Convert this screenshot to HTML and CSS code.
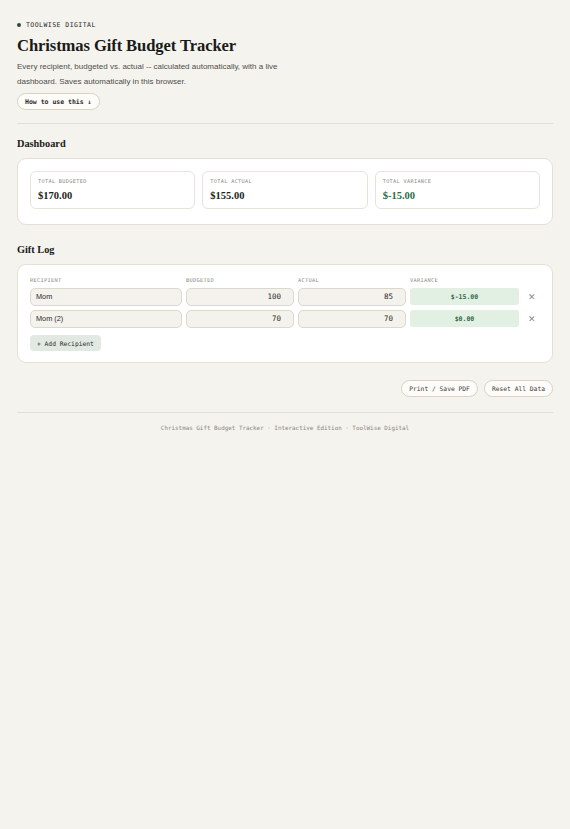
FILE: index.html
```html
<!DOCTYPE html>
<html lang="en">
<head>
<meta charset="utf-8">
<title>Christmas Gift Budget Tracker</title>
<link rel="stylesheet" href="styles.css">
</head>
<body>
<main class="page">
  <header class="hero">
    <div class="brand"><span class="brand-dot"></span>TOOLWISE DIGITAL</div>
    <h1 class="title">Christmas Gift Budget Tracker</h1>
    <p class="lede">Every recipient, budgeted vs. actual -- calculated automatically, with a live dashboard. Saves automatically in this browser.</p>
    <button class="pill-btn how">How to use this ↓</button>
  </header>

  <hr class="rule">

  <section class="section">
    <h2 class="section-title">Dashboard</h2>
    <div class="card dash">
      <div class="stats">
        <div class="stat">
          <div class="stat-label">TOTAL BUDGETED</div>
          <div class="stat-value">$170.00</div>
        </div>
        <div class="stat">
          <div class="stat-label">TOTAL ACTUAL</div>
          <div class="stat-value">$155.00</div>
        </div>
        <div class="stat">
          <div class="stat-label">TOTAL VARIANCE</div>
          <div class="stat-value green">$-15.00</div>
        </div>
      </div>
    </div>
  </section>

  <section class="section">
    <h2 class="section-title">Gift Log</h2>
    <div class="card log">
      <div class="grid head">
        <div>RECIPIENT</div>
        <div>BUDGETED</div>
        <div>ACTUAL</div>
        <div>VARIANCE</div>
        <div></div>
      </div>
      <div class="grid row">
        <input class="field text" value="Mom">
        <input class="field num" value="100">
        <input class="field num" value="85">
        <div class="var">$-15.00</div>
        <button class="remove">✕</button>
      </div>
      <div class="grid row">
        <input class="field text" value="Mom (2)">
        <input class="field num" value="70">
        <input class="field num" value="70">
        <div class="var">$0.00</div>
        <button class="remove">✕</button>
      </div>
      <button class="add">+ Add Recipient</button>
    </div>
  </section>

  <div class="actions">
    <button class="pill-btn act">Print / Save PDF</button>
    <button class="pill-btn act">Reset All Data</button>
  </div>

  <footer class="footer">Christmas Gift Budget Tracker · Interactive Edition · ToolWise Digital</footer>
</main>
</body>
</html>
```

FILE: styles.css
```css
* { box-sizing: border-box; }
html, body { margin: 0; padding: 0; background: #f4f3ee; }
body { font-family: "Liberation Sans", Arial, sans-serif; color: #1c1c1a; }

.page { padding: 20px 17px 20px 17px; }

.hero { display: flex; flex-direction: column; align-items: flex-start; }
.brand {
  display: flex; align-items: center; gap: 5px;
  font-family: "DejaVu Sans Mono", monospace; font-size: 6.5px; letter-spacing: 0.45px;
  color: #2a2a28; line-height: 10px;
}
.brand-dot { width: 4px; height: 4px; border-radius: 50%; background: #2e4a3a; }
.title {
  font-family: "Liberation Serif", "Times New Roman", serif; font-weight: 700;
  font-size: 16.6px; line-height: 20px; margin: 6px 0 0; letter-spacing: -0.1px; color: #1a1a18;
}
.lede {
  font-size: 8px; line-height: 15px; color: #4e4e4a; margin: 2.5px 0 0; max-width: 285px;
}
.pill-btn {
  font-family: "DejaVu Sans Mono", monospace; border: 1px solid #d6d2c6; background: #fdfcf9;
  border-radius: 10px; color: #2a2a28; cursor: pointer;
}
.how { margin-top: 4.5px; height: 17px; padding: 0 7px; font-size: 6.5px; font-weight: 700; }

.rule { border: 0; border-top: 1px solid #e2dfd6; margin: 12.5px 0 0; }

.section { margin-top: 13px; }
.section-title {
  font-family: "Liberation Serif", "Times New Roman", serif; font-weight: 700;
  font-size: 10.3px; line-height: 13px; margin: 0 0 8.5px; color: #1a1a18;
}
.card {
  background: #fff; border: 1.5px solid #e4e0d5; border-radius: 9px;
}
.dash { padding: 11.5px 12px 15.5px; }
.stats { display: grid; grid-template-columns: repeat(3, 1fr); gap: 7px; }
.stat { border: 1px solid #e6e3da; border-radius: 6px; padding: 6.5px 7px 0; height: 38px; }
.stat-label {
  font-family: "DejaVu Sans Mono", monospace; font-size: 5.2px; letter-spacing: 0.35px; color: #8d8b84; line-height: 7px;
}
.stat-value {
  font-family: "Liberation Serif", "Times New Roman", serif; font-weight: 700;
  font-size: 10.5px; line-height: 13px; margin-top: 3.5px; color: #1c2420;
}
.stat-value.green { color: #2f6b45; }

.section + .section { margin-top: 17.5px; }
.log { padding: 10.5px 12px 10.5px; }
.grid { display: grid; grid-template-columns: 152px 108px 108px 109px 1fr; gap: 4px; align-items: center; }
.head div {
  font-family: "DejaVu Sans Mono", monospace; font-size: 5.3px; letter-spacing: 0.3px; color: #8d8b84; line-height: 8px;
}
.head { margin-bottom: 4px; }
.row { margin-bottom: 4px; }
.field {
  height: 18px; border: 1px solid #dcd8cc; background: #f4f2ec; border-radius: 5px; width: 100%;
  padding: 0 5px; color: #2a2a28; outline: none;
}
.field.text { font-family: "Liberation Sans", Arial, sans-serif; font-size: 7.3px; }
.field.num { font-family: "DejaVu Sans Mono", monospace; font-size: 7.5px; text-align: right; padding-right: 12px; }
.var {
  height: 17px; background: #e2efe3; border-radius: 3px; color: #2f6b45;
  font-family: "DejaVu Sans Mono", monospace; font-size: 6.5px; font-weight: 700;
  display: flex; align-items: center; justify-content: center;
}
.remove {
  border: 0; background: none; color: #8a8a84; font-size: 9px; padding: 0; cursor: pointer;
  justify-self: center; width: 12px; height: 12px; line-height: 12px;
}
.add {
  margin-top: 2px; height: 16px; padding: 0 7px; border: 0; border-radius: 4px; background: #e2e9e3;
  font-family: "DejaVu Sans Mono", monospace; font-size: 6.3px; color: #2a2a28; cursor: pointer;
}

.actions { display: flex; justify-content: flex-end; gap: 6px; margin-top: 17px; }
.act { height: 17px; padding: 0 7px; font-size: 6.3px; color: #3a3a36; }

.footer {
  margin-top: 15px; border-top: 1px solid #e2dfd6; padding-top: 11px; text-align: center;
  font-family: "DejaVu Sans Mono", monospace; font-size: 5.9px; line-height: 8px; color: #8a8882;
}
```
